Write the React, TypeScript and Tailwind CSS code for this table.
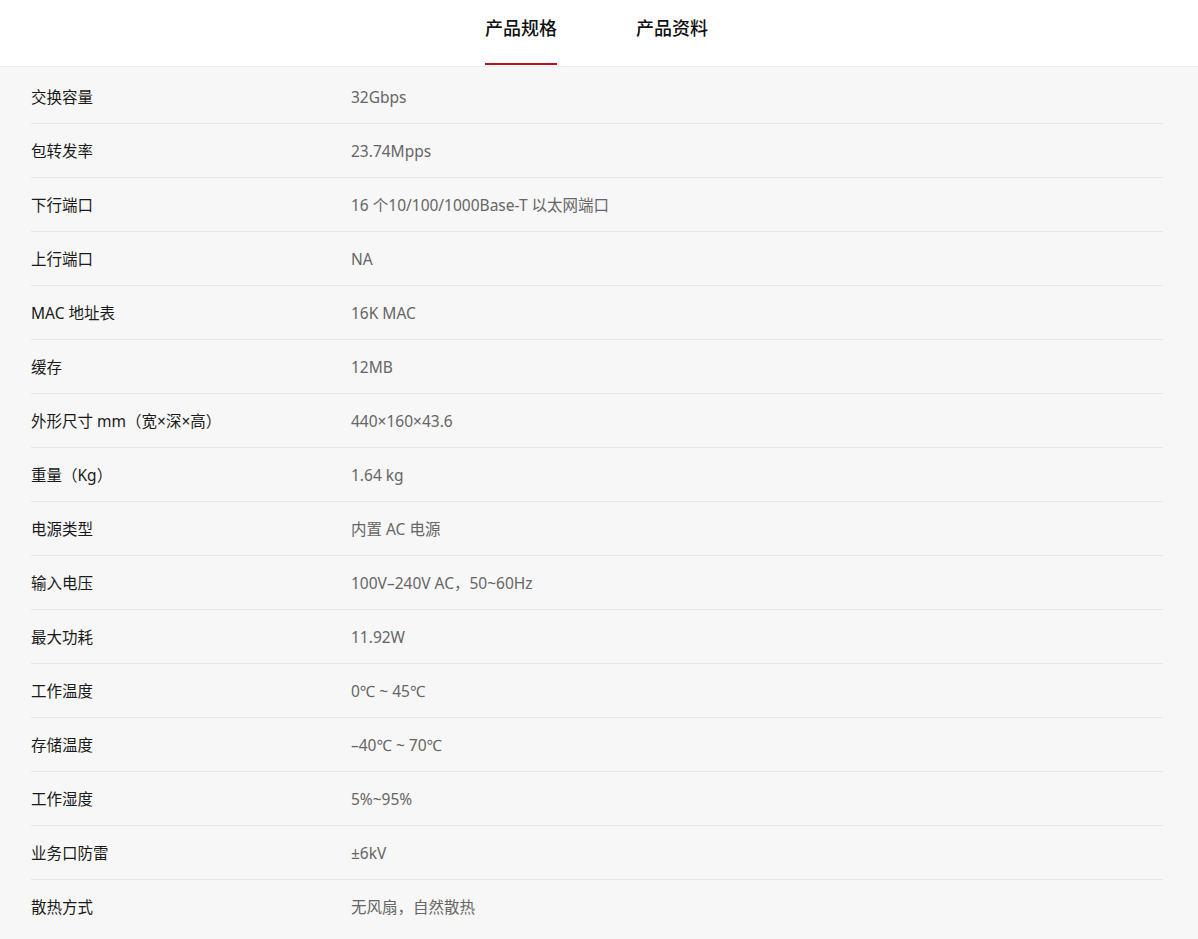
import React from "react";

const rows: [string, string][] = [
  ["交换容量", "32Gbps"],
  ["包转发率", "23.74Mpps"],
  ["下行端口", "16 个10/100/1000Base-T 以太网端口"],
  ["上行端口", "NA"],
  ["MAC 地址表", "16K MAC"],
  ["缓存", "12MB"],
  ["外形尺寸 mm（宽×深×高）", "440×160×43.6"],
  ["重量（Kg）", "1.64 kg"],
  ["电源类型", "内置 AC 电源"],
  ["输入电压", "100V–240V AC，50~60Hz"],
  ["最大功耗", "11.92W"],
  ["工作温度", "0℃ ~ 45℃"],
  ["存储温度", "–40℃ ~ 70℃"],
  ["工作湿度", "5%~95%"],
  ["业务口防雷", "±6kV"],
  ["散热方式", "无风扇，自然散热"],
];

export default function App() {
  return (
    <div
      className="min-h-[939px] w-full bg-[#f7f7f7]"
      style={{ fontFamily: '"Noto Sans", "Noto Sans CJK SC", sans-serif' }}
    >
      <div className="flex h-[67px] justify-center gap-[79px] border-b border-[#ebebeb] bg-white pr-[5px]">
        <div className="relative flex h-full items-center pb-[10px] text-[18px] font-medium text-[#111]">
          产品规格
          <div className="absolute bottom-[1px] left-0 right-0 h-[2px] bg-[#b5121b]" />
        </div>
        <div className="flex h-full items-center pb-[10px] text-[18px] font-medium text-[#111]">
          产品资料
        </div>
      </div>
      <div className="pl-[31px] pr-[35px] pt-[3px]">
        {rows.map(([k, v], i) => (
          <div
            key={i}
            className={
              "flex h-[54px] items-center pt-[2px] " +
              (i < rows.length - 1 ? "border-b border-[#e6e6e6]" : "")
            }
          >
            <div className="w-[320px] shrink-0 text-[15.5px] text-[#1a1a1a]">{k}</div>
            <div className="text-[15.5px] text-[#666]">{v}</div>
          </div>
        ))}
      </div>
    </div>
  );
}
